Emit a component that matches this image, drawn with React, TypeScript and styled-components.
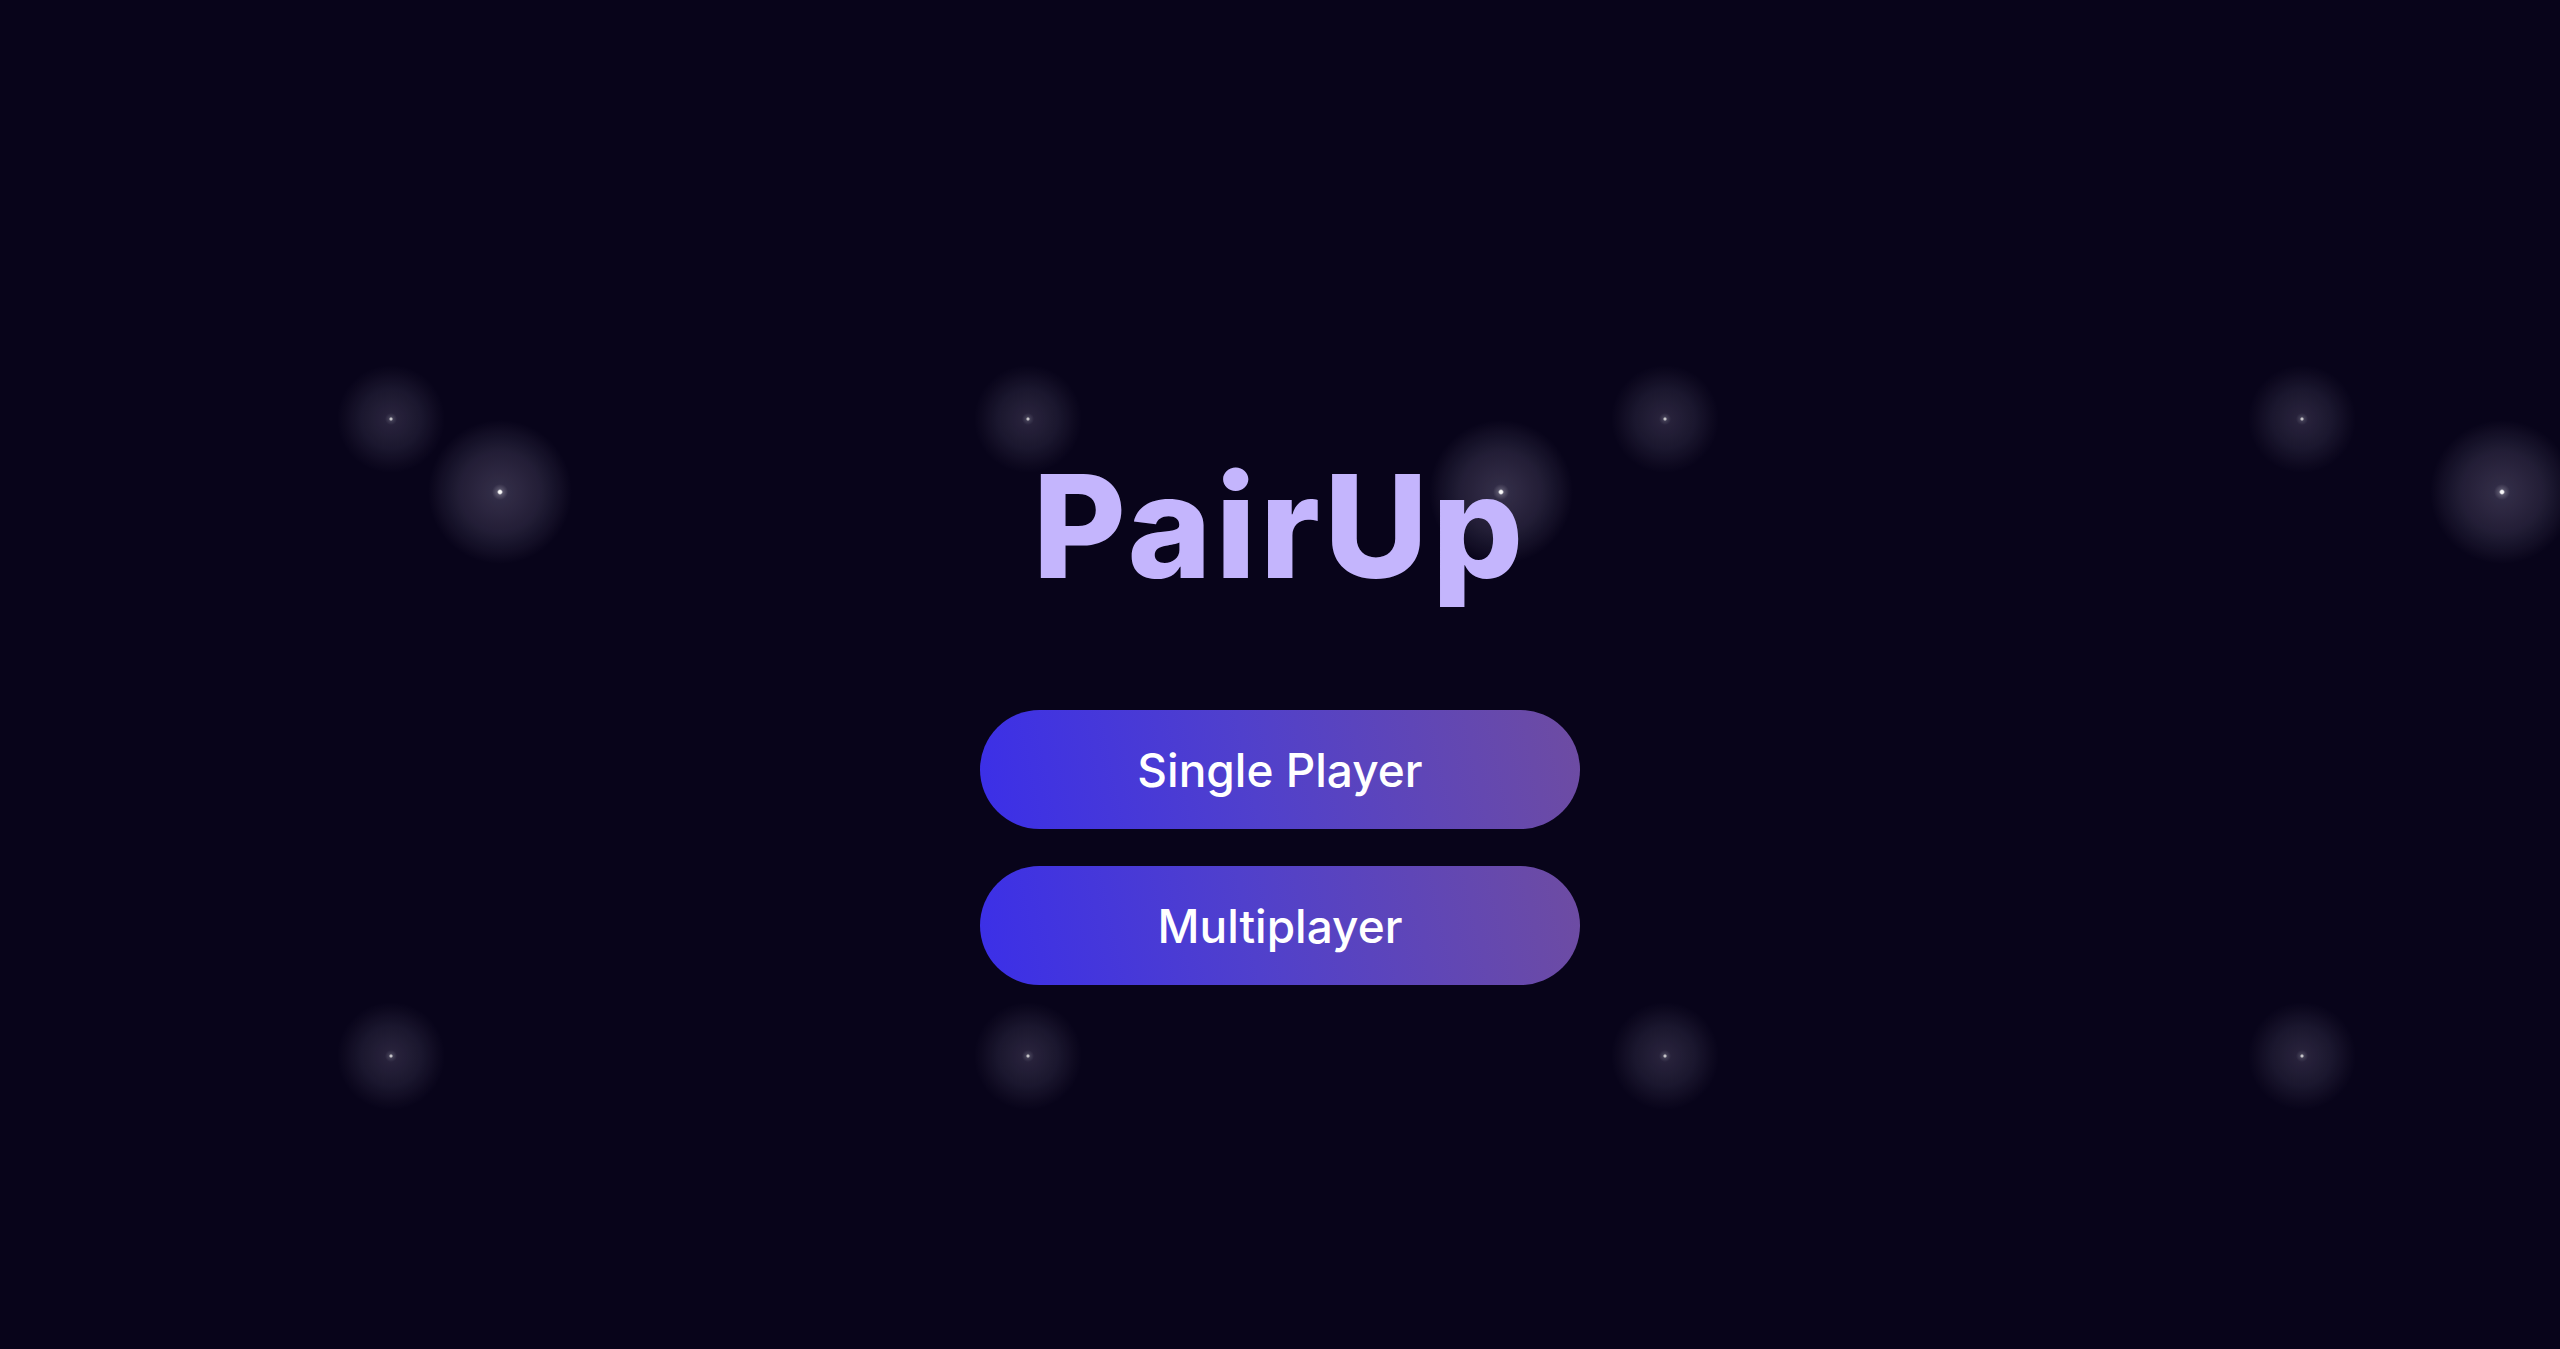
import React from "react";
import styled, { createGlobalStyle } from "styled-components";

const GlobalStyle = createGlobalStyle`
  html, body {
    margin: 0;
    padding: 0;
    background: #08041a;
  }
  * { box-sizing: border-box; }
`;

const bigStar = `radial-gradient(circle 72px at 500px 492px,
  rgba(255,255,255,1) 0px,
  rgba(255,255,255,0.95) 1.5px,
  rgba(235,230,255,0.35) 3px,
  rgba(215,205,245,0.2) 8px,
  rgba(215,205,245,0.13) 40px,
  rgba(215,205,245,0.05) 60px,
  rgba(215,205,245,0) 72px)`;

const smallStar = `radial-gradient(circle 54px at 391px 419px,
  rgba(255,255,255,0.9) 0px,
  rgba(255,255,255,0.7) 1px,
  rgba(235,230,255,0.25) 2.2px,
  rgba(215,205,245,0.15) 6px,
  rgba(215,205,245,0.09) 30px,
  rgba(215,205,245,0.03) 45px,
  rgba(215,205,245,0) 54px)`;

const Page = styled.main`
  min-height: 100vh;
  display: flex;
  flex-direction: column;
  align-items: center;
  justify-content: center;
  padding-top: 90px;
  background-color: #08041a;
  background-image: ${bigStar}, ${smallStar};
  background-size: 1001px 1001px, 637px 637px;
  background-repeat: repeat;
  background-position: 0 0, 0 0;
`;

const Title = styled.h1`
  margin: 0 0 113px;
  font-family: Inter, "Noto Sans", sans-serif;
  font-weight: 800;
  font-size: 143px;
  line-height: 1;
  letter-spacing: 4px;
  color: #c4b5fd;
`;

const Menu = styled.nav`
  display: flex;
  flex-direction: column;
  gap: 37px;
`;

const MenuButton = styled.button`
  width: 600px;
  height: 119px;
  border: none;
  border-radius: 60px;
  background: linear-gradient(78deg, #3b2fe8 0%, #5040cc 45%, #6e4ca2 100%);
  color: #ffffff;
  font-family: Inter, "Noto Sans", sans-serif;
  font-weight: 500;
  font-size: 46px;
  cursor: pointer;
  display: flex;
  align-items: center;
  justify-content: center;
  padding: 0;
`;

export default function App() {
  return (
    <>
      <GlobalStyle />
      <Page>
        <Title>PairUp</Title>
        <Menu>
          <MenuButton>Single Player</MenuButton>
          <MenuButton>Multiplayer</MenuButton>
        </Menu>
      </Page>
    </>
  );
}
